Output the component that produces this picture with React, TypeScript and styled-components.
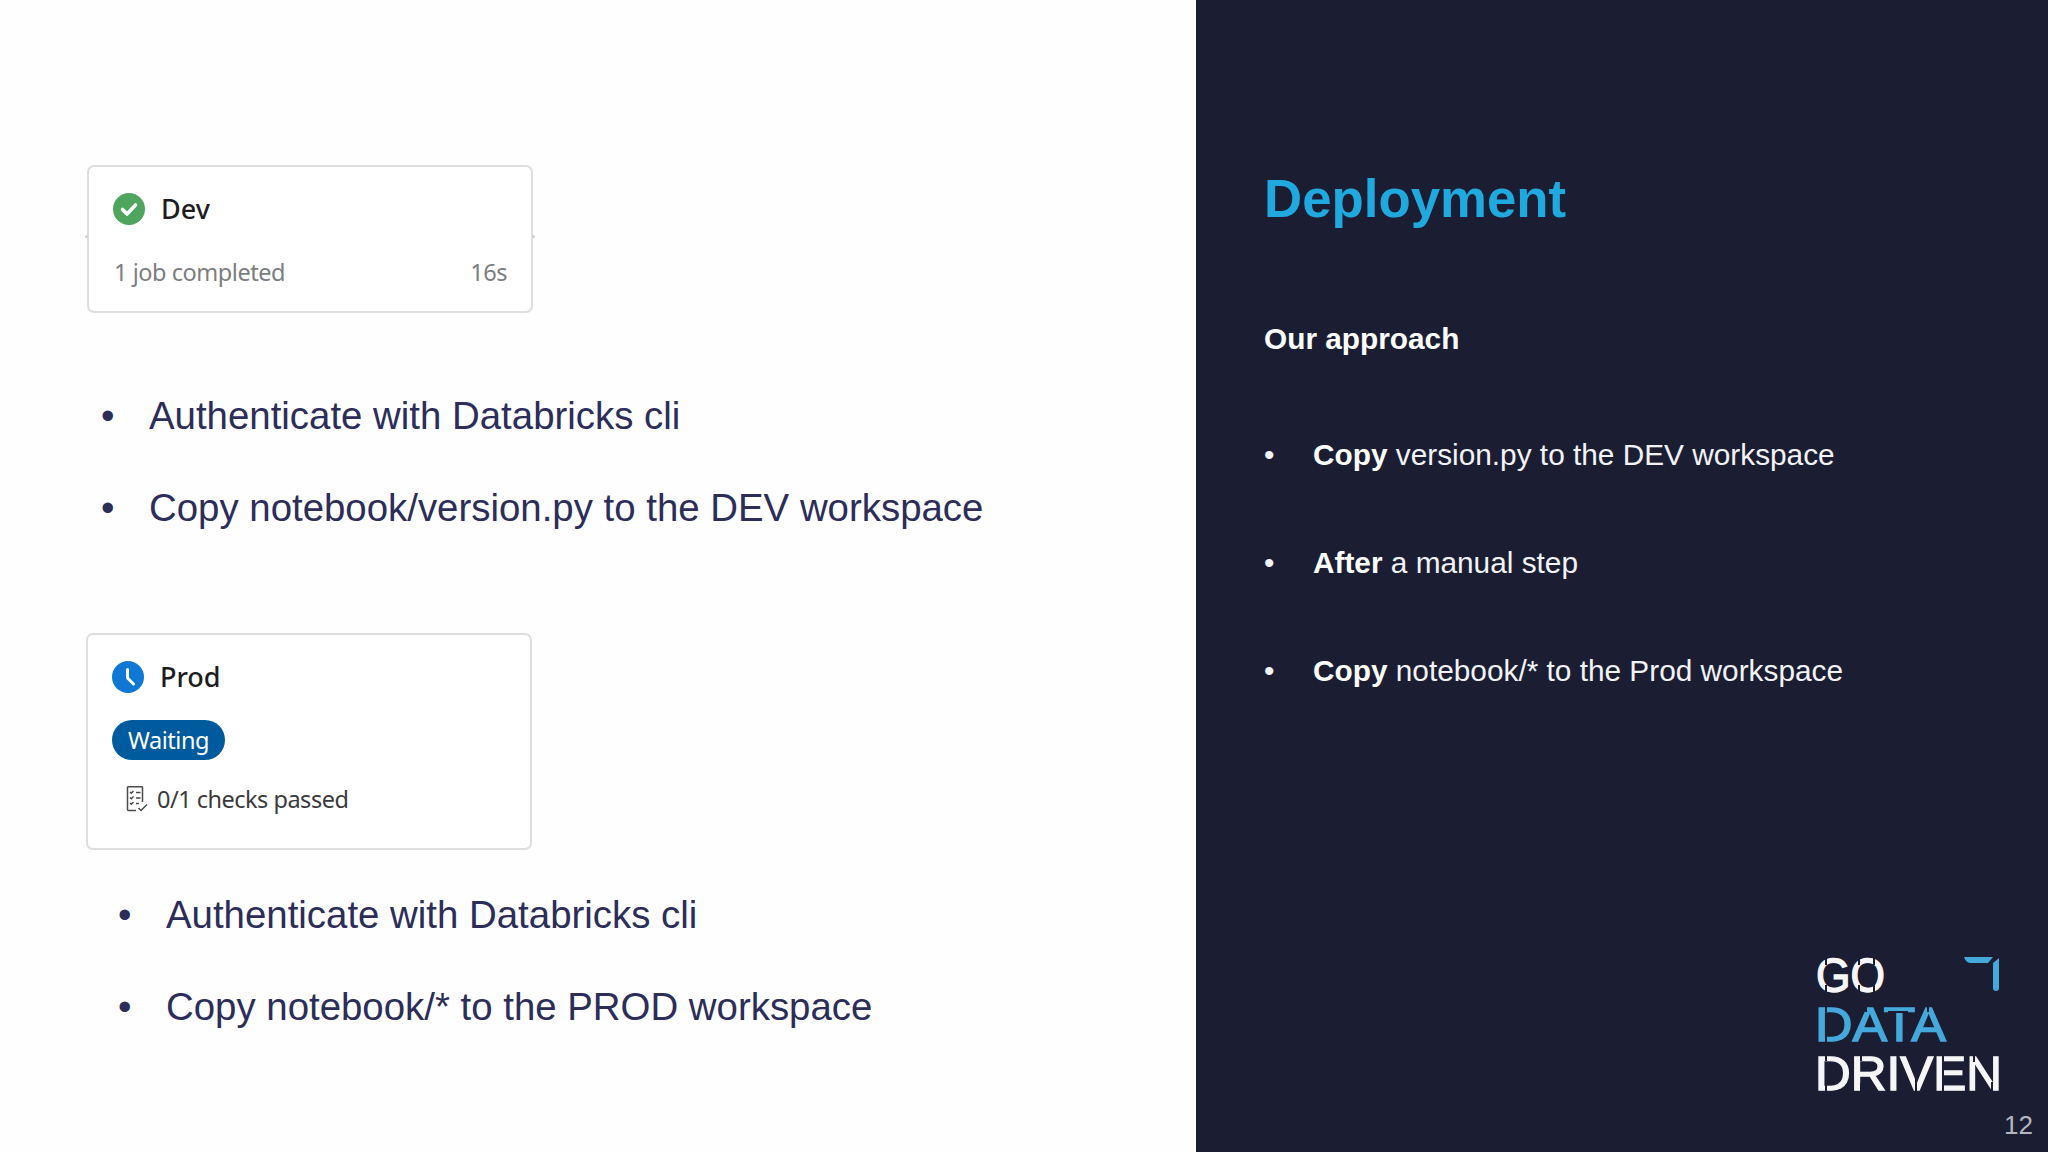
import React from "react";
import styled, { createGlobalStyle } from "styled-components";

const GlobalStyle = createGlobalStyle`
  html, body {
    margin: 0;
    padding: 0;
    background: #fefefe;
  }
  body {
    font-family: "Liberation Sans", Arial, sans-serif;
  }
`;

const Slide = styled.div`
  display: grid;
  grid-template-columns: 1196px 852px;
  width: 2048px;
  height: 1152px;
  overflow: hidden;
`;

const LeftPane = styled.section`
  display: flex;
  flex-direction: column;
  padding: 165px 0 0 87px;
  background: #fefefe;
`;

const Card = styled.div<{ $height: number; $top?: number; $left?: number; $stubs?: boolean }>`
  position: relative;
  box-sizing: border-box;
  width: 446px;
  height: ${(p) => p.$height}px;
  margin-top: ${(p) => p.$top || 0}px;
  margin-left: ${(p) => p.$left || 0}px;
  padding: 26px 24px 0 24px;
  background: #fff;
  border: 2px solid #dedede;
  border-radius: 7px;
  font-family: "Noto Sans", "Open Sans", sans-serif;

  ${(p) =>
    p.$stubs &&
    `
    &::before, &::after {
      content: "";
      position: absolute;
      top: 68px;
      width: 3px;
      height: 3px;
      border-radius: 50%;
      background: #cfcfcf;
    }
    &::before { left: -4px; }
    &::after { right: -4px; }
  `}
`;

const CardHead = styled.div`
  display: flex;
  align-items: center;
  gap: 16px;
  height: 32px;
`;

const CardTitle = styled.span`
  font-size: 27px;
  font-weight: 500;
  line-height: 32px;
  color: #1d1d1f;
`;

const JobRow = styled.div`
  display: flex;
  justify-content: space-between;
  margin: 31px 0 0 1px;
  font-size: 23.5px;
  letter-spacing: -0.45px;
  line-height: 32px;
  color: #7b7d80;
`;

const StatusPill = styled.div`
  display: inline-flex;
  align-items: center;
  box-sizing: border-box;
  height: 40px;
  margin-top: 27px;
  padding: 0 16px;
  border-radius: 20px;
  background: #005a9e;
  color: #fff;
  font-size: 23.5px;
  letter-spacing: -0.45px;
`;

const ChecksRow = styled.div`
  display: flex;
  align-items: center;
  gap: 9px;
  margin: 23px 0 0 14px;
  font-size: 23.5px;
  letter-spacing: -0.5px;
  line-height: 32px;
  color: #3a3a3c;
`;

const LeftList = styled.ul<{ $indent: number; $top: number }>`
  list-style: none;
  display: flex;
  flex-direction: column;
  gap: 48px;
  margin: ${(p) => p.$top}px 0 0 ${(p) => p.$indent}px;
  padding: 0;
  font-size: 38.4px;
  line-height: 44px;
  color: #2c2d58;

  li {
    display: flex;
  }
  li::before {
    content: "•";
    width: 48px;
    flex: none;
  }
`;

const RightPane = styled.section`
  display: flex;
  flex-direction: column;
  padding: 0 0 0 68px;
  background: #1b1e33;
  color: #fff;
`;

const Title = styled.h1`
  margin: 167px 0 0 0;
  font-size: 52.8px;
  line-height: 64px;
  font-weight: 700;
  color: #1fa9de;
`;

const Subtitle = styled.h2`
  margin: 89px 0 0 0;
  font-size: 29.8px;
  line-height: 38px;
  font-weight: 700;
  color: #fff;
`;

const ApproachList = styled.ul`
  list-style: none;
  display: flex;
  flex-direction: column;
  gap: 70px;
  margin: 78px 0 0 0;
  padding: 0;
  font-size: 29.8px;
  line-height: 38px;
  color: #f2f3f6;

  li {
    display: flex;
  }
  li::before {
    content: "•";
    width: 49px;
    flex: none;
  }
  b {
    font-weight: 700;
    color: #fff;
  }
`;

const Footer = styled.div`
  display: flex;
  flex-direction: column;
  align-items: flex-end;
  margin-top: auto;
  padding: 0 15px 12px 0;
`;

const LogoWrap = styled.div`
  margin: 0 33px 19px 0;
  line-height: 0;
`;

const PageNumber = styled.div`
  font-size: 26px;
  line-height: 30px;
  color: #b3b6c0;
`;

const CheckIcon = () => (
  <svg width="32" height="32" viewBox="0 0 32 32">
    <circle cx="16" cy="16" r="16" fill="#4fa45e" />
    <path d="M9.5 16.5l4.5 4.5 8.5-9" fill="none" stroke="#fff" strokeWidth="3.6" strokeLinecap="round" strokeLinejoin="round" />
  </svg>
);

const ClockIcon = () => (
  <svg width="32" height="32" viewBox="0 0 32 32">
    <circle cx="16" cy="16" r="16" fill="#0f78d4" />
    <path d="M15.5 8.5v8.5l6 6" fill="none" stroke="#fff" strokeWidth="3" strokeLinecap="round" strokeLinejoin="round" />
  </svg>
);

const ChecklistIcon = () => (
  <svg width="22" height="26" viewBox="0 0 22 26" fill="none" stroke="#4a4a4c" strokeWidth="1.5">
    <path d="M10 24.5H2.5a1 1 0 0 1-1-1V1.5a.8.8 0 0 1 .8-.8h13.4a.8.8 0 0 1 .8.8V16" />
    <path d="M4 6l1.3 1.3L7.5 5M4 11.5l1.3 1.3 2.2-2.3M4 17l1.3 1.3 2.2-2.3" />
    <path d="M10 6.5h4.5M10 12h4.5M10 17.5h3" />
    <path d="M12.5 22l2.5 2.5 6-6" />
  </svg>
);

const BG = "#1b1e33";

const LogoWord = styled.text`
  font-family: "Liberation Sans", Arial, sans-serif;
  font-size: 49px;
  font-weight: 400;
  stroke-width: 1.4px;
`;

const GoDataDrivenLogo = () => (
  <svg width="184" height="134" viewBox="0 0 184 134" overflow="visible">
    <LogoWord x="0" y="35" fill="#f6f6f8" stroke="#f6f6f8" textLength="69" lengthAdjust="spacingAndGlyphs">GO</LogoWord>
    <LogoWord x="-1" y="84" fill="#45a9dc" stroke="#45a9dc" textLength="131" lengthAdjust="spacingAndGlyphs">DATA</LogoWord>
    <LogoWord x="-1" y="133" fill="#f6f6f8" stroke="#f6f6f8" textLength="187" lengthAdjust="spacingAndGlyphs">DRIVEN</LogoWord>
    <g stroke={BG} strokeWidth="2" fill="none">
      {/* stencil cuts */}
      <path d="M10 -1v9M10 28v9M43 -1v9M43 28v9M58 -1v9M58 28v9" />
      <path d="M10 47v8M10 77v9M50 47v8M72 55h20M112 47v8" />
      <path d="M10 96v8M10 126v9M45 96v8M45 126v9M100 120v15M127 96v38M158 96v9M176 125v9" />
    </g>
    <path d="M148 0H177L172 6H155Q150 6 148 0Z" fill="#45a9dc" />
    <path d="M177 6L183 1V31Q183 34 180 34Q177 34 177 31Z" fill="#45a9dc" />
  </svg>
);

export default function App() {
  return (
    <>
      <GlobalStyle />
      <Slide>
        <LeftPane>
          <Card $height={148} $stubs>
            <CardHead>
              <CheckIcon />
              <CardTitle>Dev</CardTitle>
            </CardHead>
            <JobRow>
              <span>1 job completed</span>
              <span>16s</span>
            </JobRow>
          </Card>
          <LeftList $indent={14} $top={81}>
            <li>Authenticate with Databricks cli</li>
            <li>Copy notebook/version.py to the DEV workspace</li>
          </LeftList>
          <Card $height={217} $top={103} $left={-1}>
            <CardHead>
              <ClockIcon />
              <CardTitle>Prod</CardTitle>
            </CardHead>
            <StatusPill>Waiting</StatusPill>
            <ChecksRow>
              <ChecklistIcon />
              <span>0/1 checks passed</span>
            </ChecksRow>
          </Card>
          <LeftList $indent={31} $top={43}>
            <li>Authenticate with Databricks cli</li>
            <li>Copy notebook/* to the PROD workspace</li>
          </LeftList>
        </LeftPane>
        <RightPane>
          <Title>Deployment</Title>
          <Subtitle>Our approach</Subtitle>
          <ApproachList>
            <li>
              <span>
                <b>Copy</b> version.py to the DEV workspace
              </span>
            </li>
            <li>
              <span>
                <b>After</b> a manual step
              </span>
            </li>
            <li>
              <span>
                <b>Copy</b> notebook/* to the Prod workspace
              </span>
            </li>
          </ApproachList>
          <Footer>
            <LogoWrap>
              <GoDataDrivenLogo />
            </LogoWrap>
            <PageNumber>12</PageNumber>
          </Footer>
        </RightPane>
      </Slide>
    </>
  );
}
